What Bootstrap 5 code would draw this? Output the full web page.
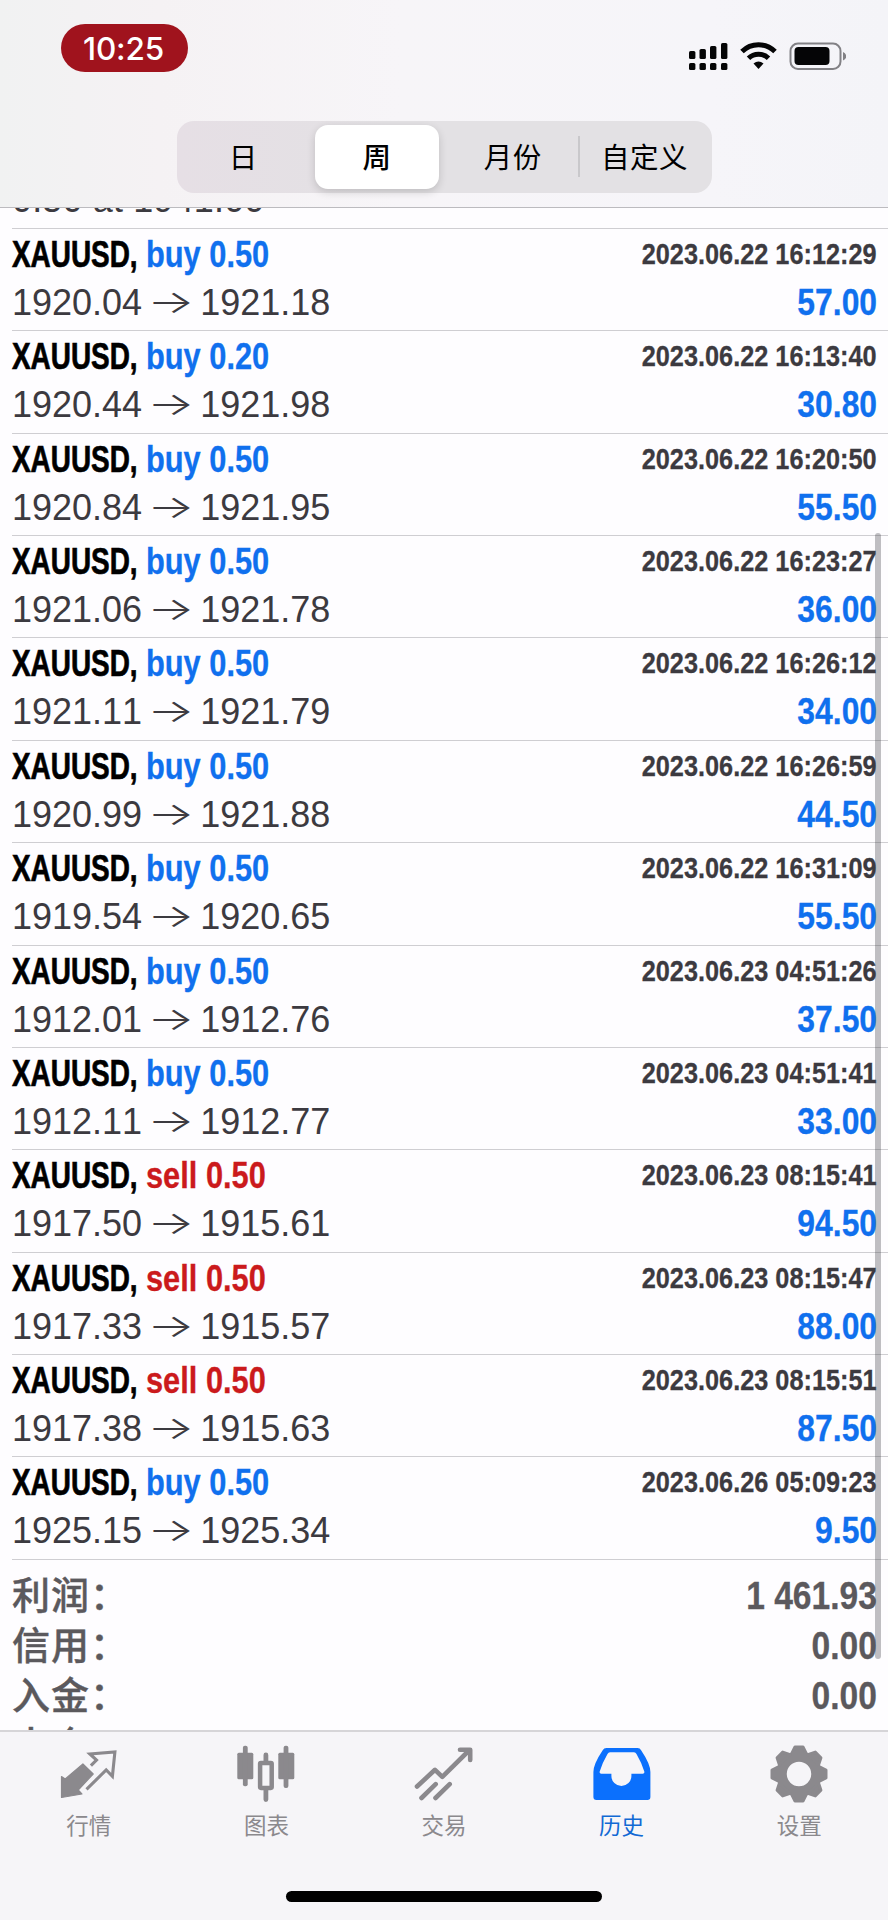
<!DOCTYPE html>
<html lang="zh-CN">
<head>
<meta charset="utf-8">
<meta name="viewport" content="width=device-width, initial-scale=1">
<title>历史</title>
<link href="https://cdn.jsdelivr.net/npm/bootstrap@5.3.0/dist/css/bootstrap.min.css" rel="stylesheet">
<style>
body{background:#fefdff;font-family:"Liberation Sans","Noto Sans CJK SC",sans-serif;color:#000}
.screen{width:888px;height:1920px}
.topbar{height:208px;border-bottom:1px solid #bcbbbf;background:linear-gradient(90deg,#f1f2f2 0,#f5f2f4 18%,#f7f5f8 45%,#f6f5f9 80%,#f4f4f8 100%)}
.statusbar{height:121px;padding:24px 42px 0 61px}
.clock{width:127px;height:48px;background:#a0131d;color:#fff;font:500 31.5px/50px Inter,sans-serif;letter-spacing:-.2px;padding-right:2px}
.status-icons{margin-top:17px}
.segments{width:535px;height:72px;border-radius:17px;background:linear-gradient(90deg,#e6dfe5 0,#e3e1e4 40%,#e3e1e4 100%);font:400 28.5px/70px "Noto Sans CJK SC",sans-serif}
.segments .seg{letter-spacing:.5px}
.seg.active{margin:4px 5px 4px 5px;border-radius:13px;background:#fff;line-height:62px;font-weight:500;box-shadow:0 3px 9px rgba(0,0,0,.16)}
.seg-month{padding-left:4px}
.seg-rule{position:relative}
.seg-rule::before{content:"";position:absolute;left:0;top:15px;width:2px;height:41px;background:#c9c8cb}
.scroll-area{height:1522px;font-kerning:none}
.deal{height:102.36px;margin-left:12px;padding:2px 11px 0 0;border-top:1px solid #cfced2}
.deal > div{height:48px;line-height:48px;white-space:nowrap}
.cond{display:inline-block;font-weight:700;transform-origin:100% 50%;-webkit-text-stroke:.3px currentColor}
.symbol{width:134px;font-size:36px;transform:scaleX(.775);transform-origin:0 50%;font-kerning:normal;-webkit-text-stroke-width:.7px}
.side{font-size:36px;transform:scaleX(.855);transform-origin:0 50%}
.blue{color:#1070ee}.red{color:#cb1a1c}
.stamp{font-size:30px;line-height:46px;color:#3c3a40;transform:scaleX(.843)}
.amount{font-size:36px;transform:scaleX(.885)}
.price{font-size:36px;color:#3c3a40}
.arrow{display:inline-block;width:58px;height:48px;vertical-align:top;line-height:45px;text-align:center;font-family:Inter,sans-serif;font-size:44px;font-weight:300;transform:scale(1.13,.74)}
.cut-row{height:20px;padding-left:12px;line-height:20px;font-size:36px;color:#3c3a40;letter-spacing:.15px}
.cut-row span{display:block;margin-top:-18px}
.totals{margin-left:12px;padding:8px 11px 0 0;border-top:1px solid #cfced2;color:#5b595d}
.totals > div{height:50px;line-height:50px;white-space:nowrap}
.totals .name{font:500 38px/50px "Noto Sans CJK SC",sans-serif;letter-spacing:1px;-webkit-text-stroke:.4px currentColor}
.totals .sum{font-size:38px;line-height:56px;transform:scaleX(.884)}
.thumb{position:absolute;left:875px;top:325px;width:6px;height:1126px;border-radius:3px;background:rgba(60,58,64,.32)}
.tabbar{height:190px;border-top:2px solid #d6d5d8;background:#f6f5f8}
.tab{color:#8b898d;font:400 22.5px/32px "Noto Sans CJK SC",sans-serif;padding-top:12px}
.tab svg{display:block;width:64px;height:64px}
.tab.active{color:#0b70fd}
.tab.active span{color:#1169d4}
.home{width:316px;height:11px;margin-top:51px;background:#000}
</style>
</head>
<body>
<div class="screen d-flex flex-column overflow-hidden">
  <header class="topbar flex-shrink-0">
    <div class="statusbar d-flex justify-content-between align-items-start">
      <div class="clock rounded-pill text-center">10:25</div>
      <svg class="status-icons" width="158" height="32" viewBox="0 0 158 32">
        <g fill="#050506"><rect x="1" y="10" width="6.4" height="8" rx="1.6"/><rect x="11.5" y="8" width="6.4" height="10" rx="1.6"/><rect x="22" y="5" width="6.4" height="13" rx="1.6"/><rect x="33" y="2" width="6.4" height="16" rx="1.6"/><rect x="1" y="22" width="6.4" height="7" rx="1.6"/><rect x="11.5" y="22" width="6.4" height="7" rx="1.6"/><rect x="22" y="22" width="6.4" height="7" rx="1.6"/><rect x="33" y="22" width="6.4" height="7" rx="1.6"/></g>
        <g fill="none" stroke="#050506" stroke-width="5"><path d="M54 10.500a23.500 23.500 0 0 1 33 0"/><path d="M60.500 17.200a14.500 14.500 0 0 1 20 0"/></g>
        <path d="M65.500 22.500q5-4 10 0l-5 5.500z" fill="#050506"/>
        <rect x="102.500" y="2.500" width="50" height="25.500" rx="7.500" fill="none" stroke="#828185" stroke-width="2"/>
        <rect x="106.500" y="6" width="35" height="18" rx="4" fill="#050506"/><path d="M155 11q3.200 1.500 3.200 4.500t-3.200 4z" fill="#828185"/>
      </svg>
    </div>
    <div class="segments d-flex mx-auto text-center">
      <div class="seg col-3">日</div>
      <div class="seg active flex-fill">周</div>
      <div class="seg seg-month col-3">月份</div>
      <div class="seg seg-rule col-3">自定义</div>
    </div>
  </header>
  <main class="scroll-area position-relative overflow-hidden flex-shrink-0">
    <div class="cut-row overflow-hidden"><span>0.50 at 1941.00</span></div>
    <div id="deals"></div>
    <div class="totals" id="totals"></div>
    <div class="thumb"></div>
  </main>
  <nav class="tabbar flex-shrink-0">
    <div class="d-flex">
      <div class="tab flex-fill w-100 d-flex flex-column align-items-center">
        <svg viewBox="0 0 64 64"><path d="M4.500 32.500l3.700 2.500L25.900 20 36.200 30 21.200 46l3.700 4-20.400 3.500z" fill="currentColor" stroke="currentColor" stroke-width="1.200" stroke-linejoin="round"/><path d="M33.900 21.700l5.600-5.700-6.600-6L57.900 8l-2.500 24.300-6.200-6.300-19.700 19.300" fill="none" stroke="currentColor" stroke-width="3.100"/></svg>
        <span>行情</span></div>
      <div class="tab flex-fill w-100 d-flex flex-column align-items-center">
        <svg viewBox="0 0 64 64" fill="currentColor"><rect x="3.300" y="8.700" width="16" height="26.500" rx="1.500"/><rect x="8.900" y="1.700" width="4.800" height="40.600" rx="2"/><rect x="44.300" y="8.700" width="16" height="26.500" rx="1.500"/><rect x="49.600" y="1.700" width="4.800" height="42.300" rx="2"/><rect x="26.100" y="18.900" width="11.600" height="25" rx=".8" fill="none" stroke="currentColor" stroke-width="4.500"/><path d="M29.500 18v-7a2.400 2.400 0 0 1 4.800 0v7zM29.500 45v10.500a2.400 2.400 0 0 0 4.800 0V45z"/></svg>
        <span>图表</span></div>
      <div class="tab flex-fill w-100 d-flex flex-column align-items-center">
        <svg viewBox="0 0 64 64" fill="none" stroke="currentColor" stroke-width="4.600" stroke-linecap="round" stroke-linejoin="round"><path d="M5 42.500l18-16.700 7.300 7L57.500 6M48 5.700h10.200V16M9.500 54l14.200-13.800M23.500 54l14.200-13.800"/></svg>
        <span>交易</span></div>
      <div class="tab active flex-fill w-100 d-flex flex-column align-items-center">
        <svg viewBox="0 0 64 64" fill="currentColor" fill-rule="evenodd"><path d="M16.500 4h31q2.500 0 3.600 2.200Q60.400 20 60.400 28v25q0 3-3 3h-51q-3 0-3-3V28q0-8 9.300-21.800Q13.900 4 16.500 4zM20 8.300q-1.600 0-2.500 1.700-5 8.500-7.800 17.500-.5 2.200 1.500 2.200H21.400v2.300a10 10 0 0 0 20 0v-2.300h11.400q2 0 1.500-2.200Q51.500 18.500 46.500 10q-.9-1.700-2.500-1.700z"/></svg>
        <span>历史</span></div>
      <div class="tab flex-fill w-100 d-flex flex-column align-items-center">
        <svg viewBox="-32 -30 64 64"><circle r="17.500" fill="none" stroke="currentColor" stroke-width="10.500"/><g fill="currentColor" stroke="currentColor" stroke-width="3" stroke-linejoin="round"><path id="tooth" d="M-7.500-20l3.500-7h8l3.500 7z"/><use href="#tooth" transform="rotate(45)"/><use href="#tooth" transform="rotate(90)"/><use href="#tooth" transform="rotate(135)"/><use href="#tooth" transform="rotate(180)"/><use href="#tooth" transform="rotate(225)"/><use href="#tooth" transform="rotate(270)"/><use href="#tooth" transform="rotate(315)"/></g></svg>
        <span>设置</span></div>
    </div>
    <div class="home rounded-pill mx-auto"></div>
  </nav>
</div>
<script src="https://cdn.jsdelivr.net/npm/bootstrap@5.3.0/dist/js/bootstrap.bundle.min.js"></script>
<script>
const deals = [
  ["buy","0.50","1920.04","1921.18","2023.06.22 16:12:29","57.00"],
  ["buy","0.20","1920.44","1921.98","2023.06.22 16:13:40","30.80"],
  ["buy","0.50","1920.84","1921.95","2023.06.22 16:20:50","55.50"],
  ["buy","0.50","1921.06","1921.78","2023.06.22 16:23:27","36.00"],
  ["buy","0.50","1921.11","1921.79","2023.06.22 16:26:12","34.00"],
  ["buy","0.50","1920.99","1921.88","2023.06.22 16:26:59","44.50"],
  ["buy","0.50","1919.54","1920.65","2023.06.22 16:31:09","55.50"],
  ["buy","0.50","1912.01","1912.76","2023.06.23 04:51:26","37.50"],
  ["buy","0.50","1912.11","1912.77","2023.06.23 04:51:41","33.00"],
  ["sell","0.50","1917.50","1915.61","2023.06.23 08:15:41","94.50"],
  ["sell","0.50","1917.33","1915.57","2023.06.23 08:15:47","88.00"],
  ["sell","0.50","1917.38","1915.63","2023.06.23 08:15:51","87.50"],
  ["buy","0.50","1925.15","1925.34","2023.06.26 05:09:23","9.50"]
];
document.getElementById("deals").innerHTML = deals.map(([side, lot, open, close, time, profit]) => `
  <div class="deal">
    <div class="d-flex"><span class="cond symbol">XAUUSD,</span><span class="cond side ${side === "buy" ? "blue" : "red"}">${side} ${lot}</span><span class="cond stamp ms-auto">${time}</span></div>
    <div class="d-flex justify-content-between"><span class="price">${open}<span class="arrow">→</span>${close}</span><span class="cond amount blue">${profit}</span></div>
  </div>`).join("");
document.getElementById("totals").innerHTML = [["利润","1 461.93"],["信用","0.00"],["入金","0.00"],["出金",""]].map(([name, sum]) =>
  `<div class="d-flex justify-content-between"><span class="name">${name}：</span><span class="cond sum">${sum}</span></div>`).join("");
</script>
</body>
</html>
